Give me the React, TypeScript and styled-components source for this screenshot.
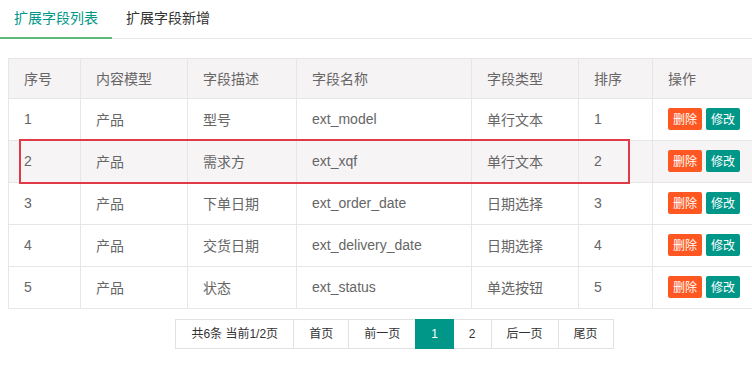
import React from 'react'
import styled, { createGlobalStyle } from 'styled-components'

const GlobalStyle = createGlobalStyle`
  html, body {
    margin: 0;
    padding: 0;
    overflow: hidden;
    background: #fff;
    font-family: 'Liberation Sans', 'Noto Sans CJK SC', sans-serif;
  }
  *, *::before, *::after {
    box-sizing: border-box;
  }
`

const TabBar = styled.ul`
  display: flex;
  margin: 0;
  padding: 0;
  list-style: none;
  height: 39px;
  border-bottom: 1px solid #e6e6e6;
`

const TabItem = styled.li<{ $active?: boolean }>`
  position: relative;
  padding: 0 14px;
  line-height: 37px;
  font-size: 14px;
  color: ${p => (p.$active ? '#009688' : '#333')};
  cursor: pointer;
  &::after {
    content: '';
    display: ${p => (p.$active ? 'block' : 'none')};
    position: absolute;
    left: 0;
    right: 0;
    bottom: -1px;
    height: 2px;
    background: #5fb878;
  }
`

const Content = styled.div`
  position: relative;
  width: 773px;
  margin: 19px 0 0 8px;
`

const Table = styled.table`
  width: 100%;
  border-collapse: collapse;
  table-layout: fixed;
  font-size: 14px;
  color: #666;
`

const Th = styled.th<{ $w?: number }>`
  width: ${p => (p.$w ? `${p.$w}px` : 'auto')};
  height: 40px;
  padding: 0 15px 2px;
  text-align: left;
  font-weight: 400;
  background: #f6f3f5;
  border: 1px solid #e6e6e6;
`

const Tr = styled.tr<{ $hover?: boolean }>`
  background: ${p => (p.$hover ? '#f7f4f6' : '#fff')};
`

const Td = styled.td`
  height: 42px;
  padding: 0 15px 2px;
  border: 1px solid #e6e6e6;
  white-space: nowrap;
`

const Btn = styled.button<{ $kind: 'danger' | 'normal' }>`
  height: 22px;
  line-height: 22px;
  padding: 0 5px;
  margin-right: 4px;
  border: none;
  border-radius: 2px;
  font-size: 12px;
  font-family: 'Noto Sans CJK SC', sans-serif;
  color: #fff;
  vertical-align: middle;
  background: ${p => (p.$kind === 'danger' ? '#ff5722' : '#009688')};
`

const Highlight = styled.div`
  position: absolute;
  left: 11px;
  top: 81px;
  width: 611px;
  height: 45px;
  border: 2px solid #e03a48;
  pointer-events: none;
`

const Pager = styled.div`
  display: flex;
  justify-content: center;
  margin-top: 10px;
`

const PageItem = styled.a<{ $current?: boolean }>`
  display: block;
  height: 30px;
  line-height: 28px;
  padding: 0 15px;
  margin-left: -1px;
  font-size: 12px;
  color: ${p => (p.$current ? '#fff' : '#333')};
  background: ${p => (p.$current ? '#009688' : '#fff')};
  border: 1px solid ${p => (p.$current ? '#009688' : '#e2e2e2')};
  position: ${p => (p.$current ? 'relative' : 'static')};
  &:first-child {
    margin-left: 0;
  }
`

const rows = [
  { id: 1, model: '产品', desc: '型号', name: 'ext_model', type: '单行文本', sort: 1 },
  { id: 2, model: '产品', desc: '需求方', name: 'ext_xqf', type: '单行文本', sort: 2 },
  { id: 3, model: '产品', desc: '下单日期', name: 'ext_order_date', type: '日期选择', sort: 3 },
  { id: 4, model: '产品', desc: '交货日期', name: 'ext_delivery_date', type: '日期选择', sort: 4 },
  { id: 5, model: '产品', desc: '状态', name: 'ext_status', type: '单选按钮', sort: 5 },
]

const pages = ['共6条 当前1/2页', '首页', '前一页', '1', '2', '后一页', '尾页']

const App: React.FC = () => {
  return (
    <>
      <GlobalStyle />
      <TabBar>
        <TabItem $active>扩展字段列表</TabItem>
        <TabItem>扩展字段新增</TabItem>
      </TabBar>
      <Content>
        <Table>
          <thead>
            <tr>
              <Th $w={72}>序号</Th>
              <Th $w={107}>内容模型</Th>
              <Th $w={109}>字段描述</Th>
              <Th $w={175}>字段名称</Th>
              <Th $w={107}>字段类型</Th>
              <Th $w={74}>排序</Th>
              <Th>操作</Th>
            </tr>
          </thead>
          <tbody>
            {rows.map(r => (
              <Tr key={r.id} $hover={r.id === 2}>
                <Td>{r.id}</Td>
                <Td>{r.model}</Td>
                <Td>{r.desc}</Td>
                <Td>{r.name}</Td>
                <Td>{r.type}</Td>
                <Td>{r.sort}</Td>
                <Td>
                  <Btn $kind="danger">删除</Btn>
                  <Btn $kind="normal">修改</Btn>
                </Td>
              </Tr>
            ))}
          </tbody>
        </Table>
        <Highlight />
        <Pager>
          {pages.map(p => (
            <PageItem key={p} $current={p === '1'}>{p}</PageItem>
          ))}
        </Pager>
      </Content>
    </>
  )
}

export default App
